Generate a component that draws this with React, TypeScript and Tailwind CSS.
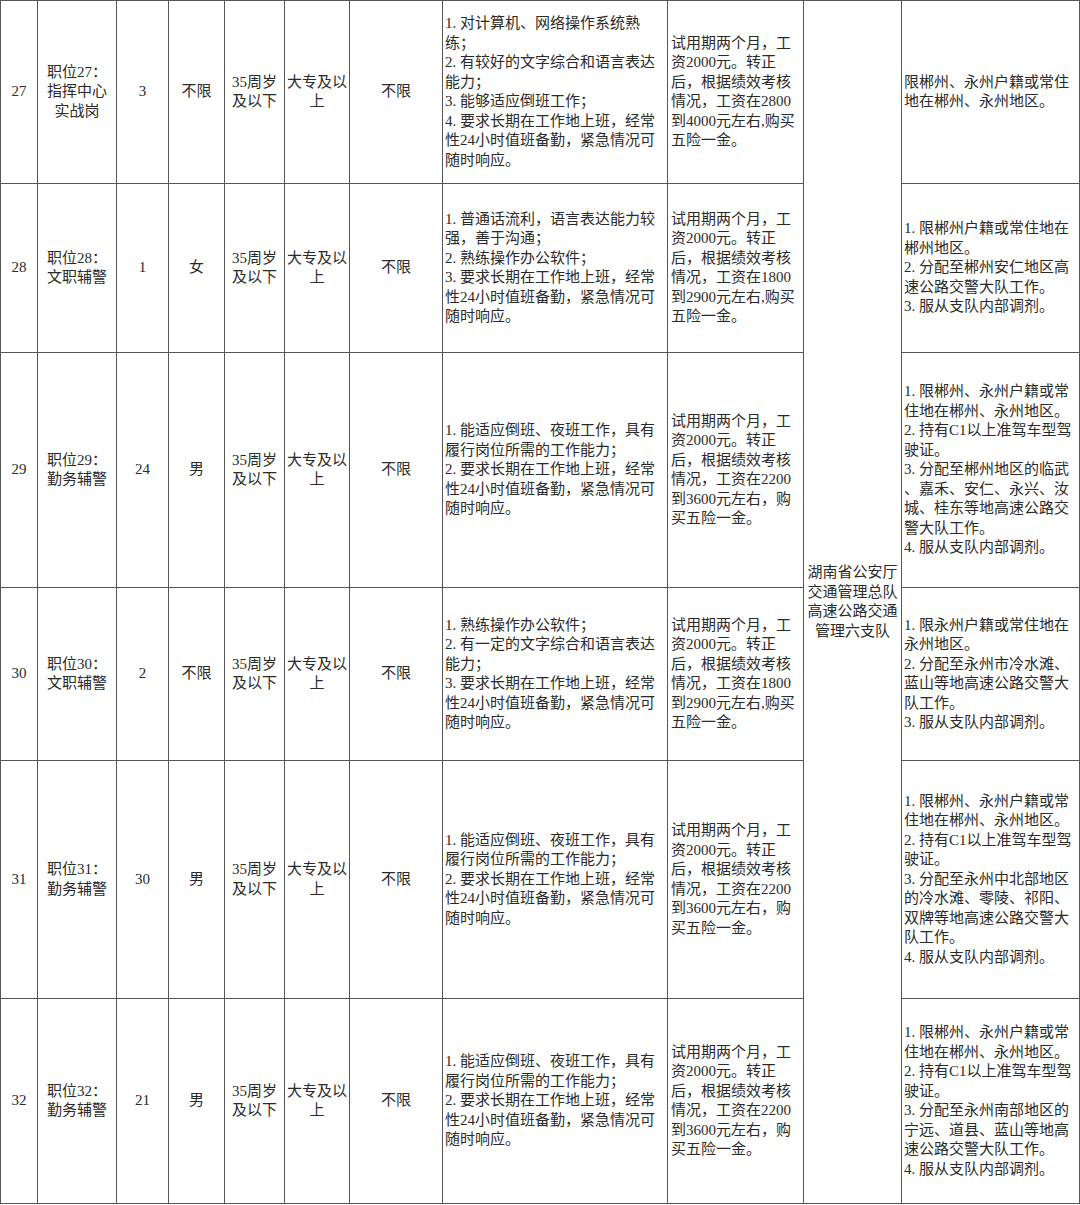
const REQ_A = [
  "1. 能适应倒班、夜班工作，具有",
  "履行岗位所需的工作能力；",
  "2. 要求长期在工作地上班，经常",
  "性24小时值班备勤，紧急情况可",
  "随时响应。",
]

const PAY_A = [
  "试用期两个月，工",
  "资2000元。转正",
  "后，根据绩效考核",
  "情况，工资在2200",
  "到3600元左右，购",
  "买五险一金。",
]

const PAY_B = [
  "试用期两个月，工",
  "资2000元。转正",
  "后，根据绩效考核",
  "情况，工资在1800",
  "到2900元左右,购买",
  "五险一金。",
]

type Row = {
  no: string
  title: string[]
  count: string
  sex: string
  req: string[]
  pay: string[]
  note: string[]
  h: string
}

const ROWS: Row[] = [
  {
    no: "27",
    title: ["职位27：", "指挥中心", "实战岗"],
    count: "3",
    sex: "不限",
    req: [
      "1. 对计算机、网络操作系统熟",
      "练；",
      "2. 有较好的文字综合和语言表达",
      "能力；",
      "3. 能够适应倒班工作；",
      "4. 要求长期在工作地上班，经常",
      "性24小时值班备勤，紧急情况可",
      "随时响应。",
    ],
    pay: [
      "试用期两个月，工",
      "资2000元。转正",
      "后，根据绩效考核",
      "情况，工资在2800",
      "到4000元左右,购买",
      "五险一金。",
    ],
    note: ["限郴州、永州户籍或常住", "地在郴州、永州地区。"],
    h: "h-[183px]",
  },
  {
    no: "28",
    title: ["职位28：", "文职辅警"],
    count: "1",
    sex: "女",
    req: [
      "1. 普通话流利，语言表达能力较",
      "强，善于沟通；",
      "2. 熟练操作办公软件；",
      "3. 要求长期在工作地上班，经常",
      "性24小时值班备勤，紧急情况可",
      "随时响应。",
    ],
    pay: PAY_B,
    note: [
      "1. 限郴州户籍或常住地在",
      "郴州地区。",
      "2. 分配至郴州安仁地区高",
      "速公路交警大队工作。",
      "3. 服从支队内部调剂。",
    ],
    h: "h-[169px]",
  },
  {
    no: "29",
    title: ["职位29：", "勤务辅警"],
    count: "24",
    sex: "男",
    req: REQ_A,
    pay: PAY_A,
    note: [
      "1. 限郴州、永州户籍或常",
      "住地在郴州、永州地区。",
      "2. 持有C1以上准驾车型驾",
      "驶证。",
      "3. 分配至郴州地区的临武",
      "、嘉禾、安仁、永兴、汝",
      "城、桂东等地高速公路交",
      "警大队工作。",
      "4. 服从支队内部调剂。",
    ],
    h: "h-[235px]",
  },
  {
    no: "30",
    title: ["职位30：", "文职辅警"],
    count: "2",
    sex: "不限",
    req: [
      "1. 熟练操作办公软件；",
      "2. 有一定的文字综合和语言表达",
      "能力；",
      "3. 要求长期在工作地上班，经常",
      "性24小时值班备勤，紧急情况可",
      "随时响应。",
    ],
    pay: PAY_B,
    note: [
      "1. 限永州户籍或常住地在",
      "永州地区。",
      "2. 分配至永州市冷水滩、",
      "蓝山等地高速公路交警大",
      "队工作。",
      "3. 服从支队内部调剂。",
    ],
    h: "h-[173px]",
  },
  {
    no: "31",
    title: ["职位31：", "勤务辅警"],
    count: "30",
    sex: "男",
    req: REQ_A,
    pay: PAY_A,
    note: [
      "1. 限郴州、永州户籍或常",
      "住地在郴州、永州地区。",
      "2. 持有C1以上准驾车型驾",
      "驶证。",
      "3. 分配至永州中北部地区",
      "的冷水滩、零陵、祁阳、",
      "双牌等地高速公路交警大",
      "队工作。",
      "4. 服从支队内部调剂。",
    ],
    h: "h-[238px]",
  },
  {
    no: "32",
    title: ["职位32：", "勤务辅警"],
    count: "21",
    sex: "男",
    req: REQ_A,
    pay: PAY_A,
    note: [
      "1. 限郴州、永州户籍或常",
      "住地在郴州、永州地区。",
      "2. 持有C1以上准驾车型驾",
      "驶证。",
      "3. 分配至永州南部地区的",
      "宁远、道县、蓝山等地高",
      "速公路交警大队工作。",
      "4. 服从支队内部调剂。",
    ],
    h: "h-[205px]",
  },
]

const UNIT = ["湖南省公安厅", "交通管理总队", "高速公路交通", "管理六支队"]

const WIDTHS = [37, 79, 52, 56, 60, 65, 93, 225, 136, 98, 178]

function Lines({ lines }: { lines: string[] }) {
  return (
    <>
      {lines.map((l, i) => (
        <div key={i} className="whitespace-nowrap">
          {l}
        </div>
      ))}
    </>
  )
}

const td = "border border-[#555] align-middle p-0"

export default function App() {
  return (
    <div className="w-[1080px] h-[1205px] bg-white overflow-hidden font-['Liberation_Serif','Noto_Sans_CJK_SC',serif] text-[15px] leading-[19.5px] text-[#2a2a2a]">
      <table className="table-fixed border-collapse w-[1079px]">
        <colgroup>
          {WIDTHS.map((w, i) => (
            <col key={i} style={{ width: w }} />
          ))}
        </colgroup>
        <tbody>
          {ROWS.map((r, idx) => (
            <tr key={r.no} className={r.h}>
              <td className={`${td} text-center`}>{r.no}</td>
              <td className={`${td} text-center`}>
                <Lines lines={r.title} />
              </td>
              <td className={`${td} text-center`}>{r.count}</td>
              <td className={`${td} text-center`}>{r.sex}</td>
              <td className={`${td} text-center`}>
                <Lines lines={["35周岁", "及以下"]} />
              </td>
              <td className={`${td} text-center`}>
                <Lines lines={["大专及以", "上"]} />
              </td>
              <td className={`${td} text-center`}>不限</td>
              <td className={`${td} text-left pl-[2px]`}>
                <Lines lines={r.req} />
              </td>
              <td className={`${td} text-left pl-[3px]`}>
                <Lines lines={r.pay} />
              </td>
              {idx === 0 && (
                <td rowSpan={6} className={`${td} text-center`}>
                  <Lines lines={UNIT} />
                </td>
              )}
              <td className={`${td} text-left pl-[2px]`}>
                <Lines lines={r.note} />
              </td>
            </tr>
          ))}
        </tbody>
      </table>
    </div>
  )
}
